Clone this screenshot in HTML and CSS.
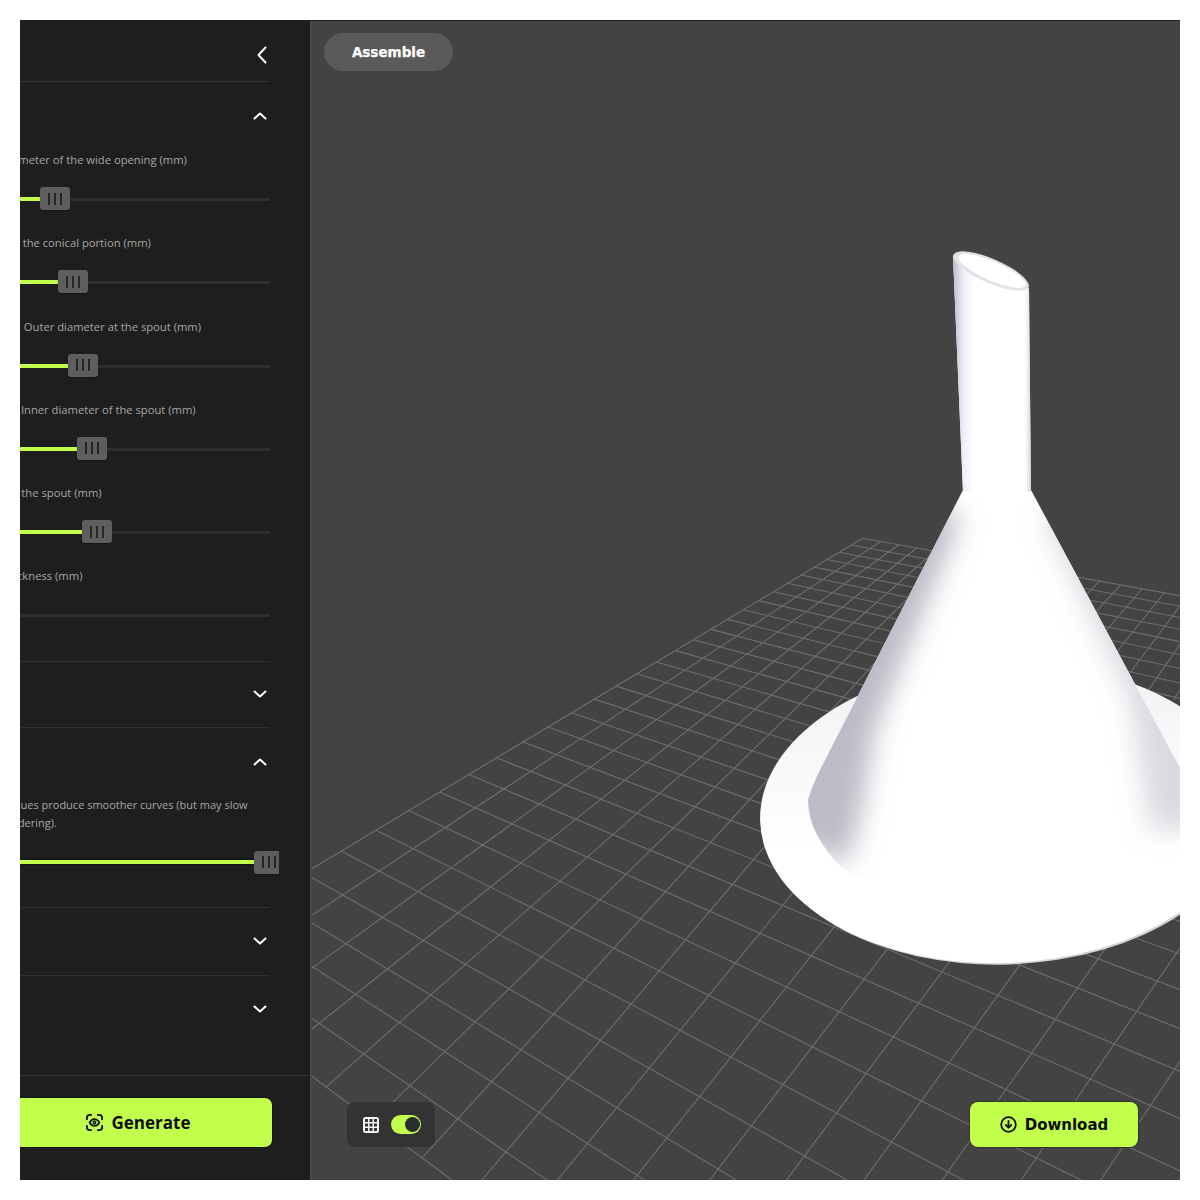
FILE: index.html
```html
<!DOCTYPE html>
<html lang="en">
<head>
<meta charset="utf-8">
<title>Funnel generator</title>
<link rel="stylesheet" href="styles.css">
</head>
<body>
<main class="app">
  <aside class="sidebar">
    <div class="panel">
      <div class="top-row">
        <svg class="icon-back" width="12" height="18" viewBox="0 0 12 18"><path d="M9.5 1.5 2.5 9l7 7.5"/></svg>
      </div>
      <section class="section">
        <div class="head-row head-open"><svg class="chev" width="14" height="8" viewBox="0 0 14 8"><path d="M1.500 6.500 7 1.500l5.500 5"/></svg></div>
        <div class="param">
          <div class="label">Outer diameter of the wide opening (mm)</div>
          <div class="slider"><div class="track"></div><div class="fill" style="width:71px"></div><div class="handle" style="left:71px"><i></i><i></i><i></i></div></div>
        </div>
        <div class="param">
          <div class="label">Height&nbsp; of the conical portion (mm)</div>
          <div class="slider"><div class="track"></div><div class="fill" style="width:89px"></div><div class="handle" style="left:89px"><i></i><i></i><i></i></div></div>
        </div>
        <div class="param">
          <div class="label">Neck end: Outer diameter at the spout (mm)</div>
          <div class="slider"><div class="track"></div><div class="fill" style="width:99px"></div><div class="handle" style="left:99px"><i></i><i></i><i></i></div></div>
        </div>
        <div class="param">
          <div class="label">Neck end Inner diameter of the spout (mm)</div>
          <div class="slider"><div class="track"></div><div class="fill" style="width:108px"></div><div class="handle" style="left:108px"><i></i><i></i><i></i></div></div>
        </div>
        <div class="param">
          <div class="label">Length of the spout (mm)</div>
          <div class="slider"><div class="track"></div><div class="fill" style="width:113px"></div><div class="handle" style="left:113px"><i></i><i></i><i></i></div></div>
        </div>
        <div class="param param-last">
          <div class="label">Lining thickness (mm)</div>
          <div class="slider"><div class="track"></div></div>
        </div>
      </section>
      <section class="section">
        <div class="head-row"><svg class="chev" width="14" height="8" viewBox="0 0 14 8"><path d="M1.500 1.500 7 6.500l5.500-5"/></svg></div>
      </section>
      <section class="section section-detail">
        <div class="head-row head-open"><svg class="chev" width="14" height="8" viewBox="0 0 14 8"><path d="M1.500 6.500 7 1.500l5.500 5"/></svg></div>
        <p class="help">Higher values produce smoother curves (but may slow down rendering).</p>
        <div class="slider slider-full"><div class="fill fill-thick" style="width:285px"></div><div class="handle" style="left:285px"><i></i><i></i><i></i></div></div>
      </section>
      <section class="section">
        <div class="head-row head-tall"><svg class="chev" width="14" height="8" viewBox="0 0 14 8"><path d="M1.500 1.500 7 6.500l5.500-5"/></svg></div>
      </section>
      <section class="section section-plain">
        <div class="head-row head-tall"><svg class="chev" width="14" height="8" viewBox="0 0 14 8"><path d="M1.500 1.500 7 6.500l5.500-5"/></svg></div>
      </section>
    </div>
    <div class="footer">
      <button class="btn btn-generate" type="button">
        <svg class="btn-icon" width="19" height="19" viewBox="0 0 20 20" fill="none" stroke="#111" stroke-width="2" stroke-linecap="round">
          <path d="M2 6.500V5a3 3 0 0 1 3-3h1.500M13.500 2H15a3 3 0 0 1 3 3v1.500M18 13.500V15a3 3 0 0 1-3 3h-1.500M6.500 18H5a3 3 0 0 1-3-3v-1.500"/>
          <path stroke-width="1.700" d="M4.800 10S6.800 6.400 10 6.400s5.200 3.600 5.200 3.600-2 3.600-5.200 3.600S4.800 10 4.800 10Z"/>
          <circle cx="10" cy="10" r="1.300" stroke-width="1.500"/>
        </svg>
        Generate
      </button>
    </div>
  </aside>

  <div class="viewer">
    <svg class="scene" viewBox="310 20 870 1160" width="870" height="1160" aria-hidden="true">
      <defs>
        <linearGradient id="spoutL" gradientUnits="userSpaceOnUse" x1="955" y1="0" x2="975" y2="0">
          <stop offset="0" stop-color="#c4c4d2"/><stop offset=".45" stop-color="#f0f0f8"/><stop offset="1" stop-color="#fff"/>
        </linearGradient>
        <linearGradient id="spoutR" gradientUnits="userSpaceOnUse" x1="1031" y1="0" x2="1023" y2="0">
          <stop offset="0" stop-color="#cfcfd2"/><stop offset="1" stop-color="#fff" stop-opacity="0"/>
        </linearGradient>
        <linearGradient id="flangeFill" gradientUnits="userSpaceOnUse" x1="0" y1="690" x2="0" y2="840">
          <stop offset="0" stop-color="#f4f2f5"/><stop offset="1" stop-color="#fff"/>
        </linearGradient>
        <clipPath id="coneClip">
          <path d="M963 490 1031 490 1180 768V900L900 900 842 868Q808 834 808 800Q812 786 820 770Z"/>
        </clipPath>
        <clipPath id="nearClip"><path d="M310 20H1000V700H1180V1180H310Z"/></clipPath>
        <clipPath id="farClip"><path d="M1000 20H1180V700H1000Z"/></clipPath>
        <filter id="soft" x="-30%" y="-10%" width="160%" height="120%">
          <feGaussianBlur stdDeviation="13"/>
        </filter>
      </defs>
      <g class="grid-lines">
        <g id="gridNear" clip-path="url(#nearClip)"></g>
        <g id="gridFar" clip-path="url(#farClip)"></g>
        <g id="gridRows"></g>
      </g>
      <ellipse cx="1005" cy="814.500" rx="243" ry="150" transform="rotate(-2 1005 814.500)" fill="#d4d4d8"/>
      <ellipse cx="1003" cy="813" rx="243" ry="150" transform="rotate(-2 1003 813)" fill="url(#flangeFill)"/>
      <path d="M963 490 1031 490 1180 768V900L900 900 842 868Q808 834 808 800Q812 786 820 770Z" fill="#fff"/>
      <g clip-path="url(#coneClip)">
        <path d="M935 500 960 520 875 730 860 820 845 865 770 830 790 700Z" fill="#bdbbc6" filter="url(#soft)"/>
        <path d="M1065 500 1045 520 1130 700 1150 830 1220 830 1220 740Z" fill="#dcd9e0" filter="url(#soft)"/>
      </g>
      <path d="M953 256 1029 288 1031 492 963 492Z" fill="#fff"/>
      <path d="M953 256 985 270V492H963Z" fill="url(#spoutL)"/>
      <path d="M1029 288 1018 285V492H1031Z" fill="url(#spoutR)"/>
      <ellipse cx="991" cy="271" rx="41" ry="12" transform="rotate(23.500 991 271)" fill="#e2e2e6"/>
      <ellipse cx="992" cy="271" rx="36.500" ry="9.500" transform="rotate(23.500 992 271)" fill="#fff"/>
    </svg>

    <button class="pill" type="button">Assemble</button>

    <div class="grid-toggle">
      <svg width="16" height="16" viewBox="0 0 16 16">
        <rect x="0" y="0" width="16" height="16" rx="2.500" fill="#f4f4f4"/>
        <g class="cells"><rect x="2" y="2" width="3" height="3"/><rect x="6.500" y="2" width="3" height="3"/><rect x="11" y="2" width="3" height="3"/><rect x="2" y="6.500" width="3" height="3"/><rect x="6.500" y="6.500" width="3" height="3"/><rect x="11" y="6.500" width="3" height="3"/><rect x="2" y="11" width="3" height="3"/><rect x="6.500" y="11" width="3" height="3"/><rect x="11" y="11" width="3" height="3"/></g>
      </svg>
      <span class="switch"><span class="knob"></span></span>
    </div>

    <button class="btn btn-download" type="button">
      <svg width="17" height="17" viewBox="0 0 17 17" fill="none" stroke="#111" stroke-width="1.800" stroke-linecap="round" stroke-linejoin="round">
        <circle cx="8.500" cy="8.500" r="7.300"/><path d="M8.500 4.800v6.600M5.800 9l2.700 2.700L11.200 9"/>
      </svg>
      Download
    </button>
  </div>
</main>
<script src="grid.js"></script>
</body>
</html>
```
FILE: styles.css
```css
* { box-sizing: border-box; }
html, body { margin: 0; padding: 0; background: #fff; }
body { padding: 20px; height: 1200px; overflow: hidden; font-family: "Open Sans", "Noto Sans", sans-serif; }

.app { display: flex; width: 1160px; height: 1160px; border-top: 1px solid #222; }

.sidebar { width: 290px; flex: none; height: 100%; background: #1e1e1e; overflow: hidden; display: flex; flex-direction: column; }
.panel { margin-left: -51px; width: 301px; flex: 1; }

.top-row { height: 61px; display: flex; align-items: center; justify-content: flex-end; padding-right: 2px; padding-top: 7px; border-bottom: 1px solid #333; }
.icon-back { fill: none; stroke: #fff; stroke-width: 2; stroke-linecap: round; stroke-linejoin: round; }

.section { border-bottom: 1px solid #303030; }
.section-plain { border-bottom: 0; }
.head-row { height: 65px; display: flex; align-items: center; justify-content: flex-end; padding-right: 3px; }
.head-open { height: 68px; }
.head-tall { height: 67px; }
.chev { fill: none; stroke: #fff; stroke-width: 2; stroke-linecap: round; stroke-linejoin: round; }

.param { height: 83.300px; }
.param-last { height: 94.500px; }
.label { font-size: 11.230px; line-height: 20px; color: #a6a6a6; white-space: nowrap; margin-bottom: 18px; }

.slider { position: relative; height: 22px; }
.track { position: absolute; left: 0; right: 0; top: 10px; height: 3px; background: #2f2f2f; border-radius: 2px; }
.fill { position: absolute; left: 0; top: 9px; height: 4px; background: #c2ff4d; }
.fill-thick { box-shadow: 0 0 0 1.500px #141414; }
.handle { position: absolute; top: -1px; width: 30px; height: 23px; background: #5e5e5e; border-radius: 3px; box-shadow: 0 1px 1px #151515; display: flex; align-items: center; justify-content: center; gap: 4px; }
.handle i { display: block; width: 2px; height: 12px; background: #262626; }

.section-detail { height: 180px; }
.help { margin: 0 0 19px; font-size: 11px; line-height: 18px; color: #a6a6a6; }
.slider-full { width: 310px; overflow: hidden; height: 24px; }
.slider-full .handle { top: 0; }

.footer { height: 105px; flex: none; border-top: 1px solid #333; padding-top: 22px; }

.btn { display: flex; align-items: center; justify-content: center; border: 0; background: #c2ff4d; color: #0d0d0d; font-weight: 700; }
.btn-generate { width: 252px; height: 49px; gap: 8px; border-radius: 0 7px 7px 0; font-family: "Open Sans", "Noto Sans", sans-serif; font-size: 17px; box-shadow: 0 0 0 1px #141414; padding: 0 17px 0 0; }

.viewer { position: relative; flex: 1; height: 100%; background: #434343; border-left: 2px solid #4b4b4b; overflow: hidden; }
.scene { position: absolute; left: -2px; top: -1px; display: block; }
.grid-lines line { stroke: #6e6e6e; stroke-width: 1.100; }

.pill { position: absolute; left: 12px; top: 12px; width: 129px; height: 38px; border: 0; border-radius: 19px; background: #5a5a5a; color: #fff; font-family: "DejaVu Sans", sans-serif; font-weight: 700; font-size: 13.500px; -webkit-text-stroke: .25px #fff; }

.grid-toggle { position: absolute; left: 35px; top: 1081px; width: 88px; height: 45px; border-radius: 8px; background: #333; display: flex; align-items: center; gap: 12px; padding-left: 16px; }
.cells rect { fill: #333; }
.switch { position: relative; display: block; width: 30px; height: 19px; border-radius: 10px; background: #c2ff4d; }
.knob { position: absolute; right: 1.500px; top: 2px; width: 15px; height: 15px; border-radius: 50%; background: #2a2d2f; }

.btn-download { position: absolute; left: 658px; top: 1081px; width: 168px; height: 45px; gap: 8px; border-radius: 8px; font-family: "DejaVu Sans", sans-serif; font-size: 15px; box-shadow: 0 0 0 1px #333; }
```
FILE: grid.js
```js
// Floor grid. The rows run to one vanishing point; the columns are fitted separately
// on each side of the funnel, since the funnel hides where the two sets meet.
(function () {
  var VA = [1528, 139], VB = [-830, 232], C = [863, 538];
  var K_FORMULA = 27;
  var nearIntercepts = [922, 965, 1017, 1075]; // where the nearest rows meet the canvas's left side

  function alongTo(V, x) {
    var t = (x - C[0]) / (V[0] - C[0]);
    return [x, C[1] + t * (V[1] - C[1])];
  }
  function cross(p1, p2, p3, p4) {
    var d = (p1[0] - p2[0]) * (p3[1] - p4[1]) - (p1[1] - p2[1]) * (p3[0] - p4[0]);
    var a = p1[0] * p2[1] - p1[1] * p2[0], b = p3[0] * p4[1] - p3[1] * p4[0];
    return [(a * (p3[0] - p4[0]) - (p1[0] - p2[0]) * b) / d, (a * (p3[1] - p4[1]) - (p1[1] - p2[1]) * b) / d];
  }
  function leftPt(k) {
    if (k <= K_FORMULA) return alongTo(VA, VA[0] - 1 / (0.001503 - 0.0000254 * k));
    return cross(C, VA, VB, [310, nearIntercepts[k - K_FORMULA - 1]]);
  }
  function backPt(i) { return alongTo(VB, VB[0] + 1 / (0.000591 - 0.0000056 * i)); }

  function add(id, p, q) {
    var l = document.createElementNS('http://www.w3.org/2000/svg', 'line');
    l.setAttribute('x1', p[0]); l.setAttribute('y1', p[1]);
    l.setAttribute('x2', q[0]); l.setAttribute('y2', q[1]);
    document.getElementById(id).appendChild(l);
  }

  var K_MAX = K_FORMULA + nearIntercepts.length;
  var front = leftPt(K_MAX), farRight = backPt(30);

  // Columns left of and below the funnel: fitted through a reference row.
  for (var i = 0; i <= 24; i++) {
    var rx = 269.5 + 38 * i + 0.7 * i * i, r = [rx, 730.5 + 0.607 * rx], top;
    if (i <= 6) {
      top = alongTo(VB, 863 + 18 * i);
    } else {
      var s = 1.14 + 0.04 * (i - 6);
      top = [rx + 1200, r[1] - 1200 * s];
    }
    add('gridNear', top, cross(top, r, front, VB));
  }
  // Columns right of the cone.
  for (var j = 0; j <= 30; j++) {
    var q = backPt(j);
    add('gridFar', q, cross(q, VA, front, VB));
  }
  // Rows.
  for (var k = 0; k <= K_MAX; k++) {
    var p = leftPt(k);
    add('gridRows', p, cross(p, VB, farRight, VA));
  }
})();
```
